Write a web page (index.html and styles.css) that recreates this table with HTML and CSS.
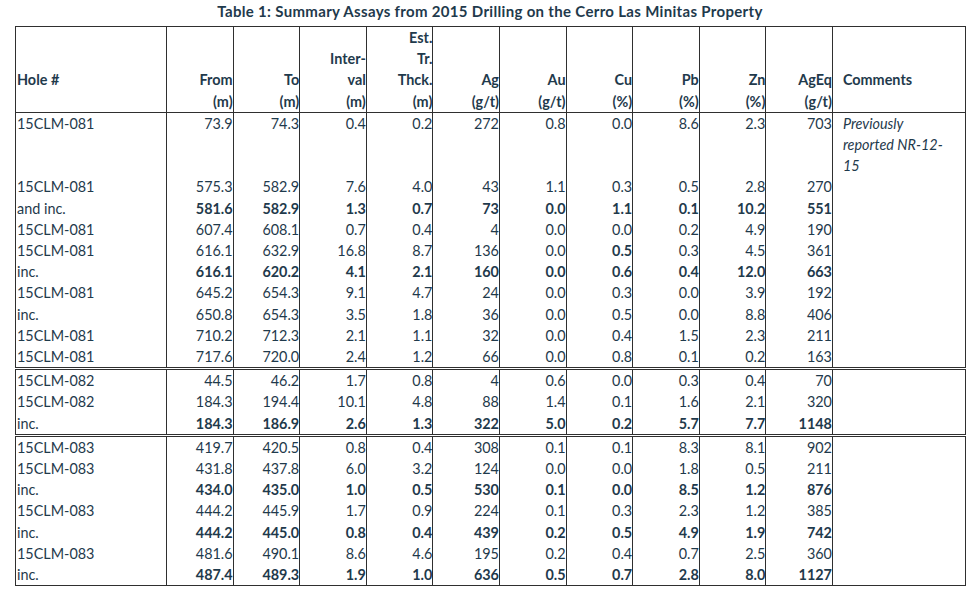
FILE: index.html
```html
<!DOCTYPE html>
<html lang="en">
<head>
<meta charset="utf-8">
<title>Summary Assays</title>
<link rel="stylesheet" href="styles.css">
</head>
<body>
<div class="page">
  <h1 class="title">Table 1: Summary Assays from 2015 Drilling on the Cerro Las Minitas Property</h1>
  <table class="assays">
    <colgroup>
      <col class="c-hole">
      <col class="c-num"><col class="c-num"><col class="c-num"><col class="c-num"><col class="c-num">
      <col class="c-num"><col class="c-num"><col class="c-num"><col class="c-num"><col class="c-num">
      <col class="c-comm">
    </colgroup>
    <thead>
      <tr>
        <th class="hole lbl">Hole #</th>
        <th>From<br>(m)</th>
        <th>To<br>(m)</th>
        <th>Inter-<br>val<br>(m)</th>
        <th>Est.<br>Tr.<br>Thck.<br>(m)</th>
        <th>Ag<br>(g/t)</th>
        <th>Au<br>(g/t)</th>
        <th>Cu<br>(%)</th>
        <th>Pb<br>(%)</th>
        <th>Zn<br>(%)</th>
        <th>AgEq<br>(g/t)</th>
        <th class="comm lbl">Comments</th>
      </tr>
    </thead>
    <tbody class="grp">
      <tr><td class="hole">15CLM-081</td><td>73.9</td><td>74.3</td><td>0.4</td><td>0.2</td><td>272</td><td>0.8</td><td>0.0</td><td>8.6</td><td>2.3</td><td>703</td><td class="comm note">Previously reported NR-12-15</td></tr>
      <tr><td class="hole">15CLM-081</td><td>575.3</td><td>582.9</td><td>7.6</td><td>4.0</td><td>43</td><td>1.1</td><td>0.3</td><td>0.5</td><td>2.8</td><td>270</td><td class="comm"></td></tr>
      <tr class="b"><td class="hole">and inc.</td><td>581.6</td><td>582.9</td><td>1.3</td><td>0.7</td><td>73</td><td>0.0</td><td>1.1</td><td>0.1</td><td>10.2</td><td>551</td><td class="comm"></td></tr>
      <tr><td class="hole">15CLM-081</td><td>607.4</td><td>608.1</td><td>0.7</td><td>0.4</td><td>4</td><td>0.0</td><td>0.0</td><td>0.2</td><td>4.9</td><td>190</td><td class="comm"></td></tr>
      <tr><td class="hole">15CLM-081</td><td>616.1</td><td>632.9</td><td>16.8</td><td>8.7</td><td>136</td><td>0.0</td><td class="bold">0.5</td><td>0.3</td><td>4.5</td><td>361</td><td class="comm"></td></tr>
      <tr class="b"><td class="hole">inc.</td><td>616.1</td><td>620.2</td><td>4.1</td><td>2.1</td><td>160</td><td>0.0</td><td>0.6</td><td>0.4</td><td>12.0</td><td>663</td><td class="comm"></td></tr>
      <tr><td class="hole">15CLM-081</td><td>645.2</td><td>654.3</td><td>9.1</td><td>4.7</td><td>24</td><td>0.0</td><td>0.3</td><td>0.0</td><td>3.9</td><td>192</td><td class="comm"></td></tr>
      <tr><td class="hole">inc.</td><td>650.8</td><td>654.3</td><td>3.5</td><td>1.8</td><td>36</td><td>0.0</td><td>0.5</td><td>0.0</td><td>8.8</td><td>406</td><td class="comm"></td></tr>
      <tr><td class="hole">15CLM-081</td><td>710.2</td><td>712.3</td><td>2.1</td><td>1.1</td><td>32</td><td>0.0</td><td>0.4</td><td>1.5</td><td>2.3</td><td>211</td><td class="comm"></td></tr>
      <tr><td class="hole">15CLM-081</td><td>717.6</td><td>720.0</td><td>2.4</td><td>1.2</td><td>66</td><td>0.0</td><td>0.8</td><td>0.1</td><td>0.2</td><td>163</td><td class="comm"></td></tr>
    </tbody>
    <tbody class="grp sep">
      <tr><td class="hole">15CLM-082</td><td>44.5</td><td>46.2</td><td>1.7</td><td>0.8</td><td>4</td><td>0.6</td><td>0.0</td><td>0.3</td><td>0.4</td><td>70</td><td class="comm"></td></tr>
      <tr><td class="hole">15CLM-082</td><td>184.3</td><td>194.4</td><td>10.1</td><td>4.8</td><td>88</td><td>1.4</td><td>0.1</td><td>1.6</td><td>2.1</td><td>320</td><td class="comm"></td></tr>
      <tr class="b"><td class="hole">inc.</td><td>184.3</td><td>186.9</td><td>2.6</td><td>1.3</td><td>322</td><td>5.0</td><td>0.2</td><td>5.7</td><td>7.7</td><td>1148</td><td class="comm"></td></tr>
    </tbody>
    <tbody class="grp sep">
      <tr><td class="hole">15CLM-083</td><td>419.7</td><td>420.5</td><td>0.8</td><td>0.4</td><td>308</td><td>0.1</td><td>0.1</td><td>8.3</td><td>8.1</td><td>902</td><td class="comm"></td></tr>
      <tr><td class="hole">15CLM-083</td><td>431.8</td><td>437.8</td><td>6.0</td><td>3.2</td><td>124</td><td>0.0</td><td>0.0</td><td>1.8</td><td>0.5</td><td>211</td><td class="comm"></td></tr>
      <tr class="b"><td class="hole">inc.</td><td>434.0</td><td>435.0</td><td>1.0</td><td>0.5</td><td>530</td><td>0.1</td><td>0.0</td><td>8.5</td><td>1.2</td><td>876</td><td class="comm"></td></tr>
      <tr><td class="hole">15CLM-083</td><td>444.2</td><td>445.9</td><td>1.7</td><td>0.9</td><td>224</td><td>0.1</td><td>0.3</td><td>2.3</td><td>1.2</td><td>385</td><td class="comm"></td></tr>
      <tr class="b"><td class="hole">inc.</td><td>444.2</td><td>445.0</td><td>0.8</td><td>0.4</td><td>439</td><td>0.2</td><td>0.5</td><td>4.9</td><td>1.9</td><td>742</td><td class="comm"></td></tr>
      <tr><td class="hole">15CLM-083</td><td>481.6</td><td>490.1</td><td>8.6</td><td>4.6</td><td>195</td><td>0.2</td><td>0.4</td><td>0.7</td><td>2.5</td><td>360</td><td class="comm"></td></tr>
      <tr class="b"><td class="hole">inc.</td><td>487.4</td><td>489.3</td><td>1.9</td><td>1.0</td><td>636</td><td>0.5</td><td>0.7</td><td>2.8</td><td>8.0</td><td>1127</td><td class="comm"></td></tr>
    </tbody>
  </table>
</div>
</body>
</html>
```

FILE: styles.css
```css
html, body {
  margin: 0;
  padding: 0;
  background: #ffffff;
}

body {
  font-family: Lato, "Open Sans", "Liberation Sans", sans-serif;
  color: #1f3a4c;
}

.page {
  width: 950px;
  padding: 0 15px 0 15px;
}

.title {
  margin: 0;
  padding-top: 1px;
  height: 25px;
  font-size: 15px;
  font-weight: 700;
  line-height: 20px;
  text-align: center;
  letter-spacing: 0.32px;
}

.assays {
  width: 950px;
  table-layout: fixed;
  border-collapse: collapse;
  font-size: 14.4px;
  line-height: 21.2px;
  border: 1px solid #2f2f2f;
}

.c-hole { width: 151px; }
.c-num { width: 66.6px; }
.c-comm { width: 133px; }

.assays th,
.assays td {
  padding: 0;
  border-left: 1px solid #2f2f2f;
  border-right: 1px solid #2f2f2f;
  text-align: right;
  vertical-align: top;
  white-space: nowrap;
}

.assays th {
  font-weight: 700;
  vertical-align: bottom;
  border-bottom: 1px solid #2f2f2f;
}

.assays th.lbl {
  padding-bottom: 21.2px;
}

.assays .hole {
  text-align: left;
  padding-left: 1px;
  font-weight: 400;
}

.assays th.hole {
  font-weight: 700;
}

.assays .comm {
  text-align: left;
  padding-left: 10px;
  padding-right: 8px;
  white-space: normal;
}

.assays .note {
  font-style: italic;
}

.assays tr.b td {
  font-weight: 700;
}

.assays tr.b td.hole {
  font-weight: 400;
}

.assays td.bold {
  font-weight: 700;
}

.assays tbody.sep tr:first-child td {
  border-top: 3px double #2f2f2f;
}
```
